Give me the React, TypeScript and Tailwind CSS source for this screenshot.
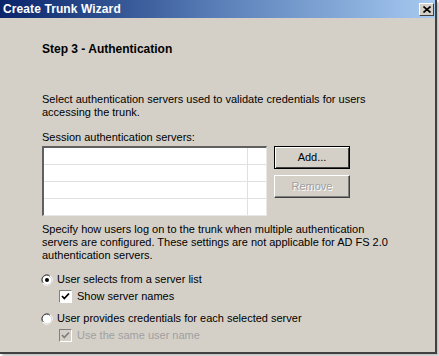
import type { ReactNode } from 'react';

const font = { fontFamily: '"Liberation Sans", Arial, sans-serif' };

function Radio({ checked }: { checked?: boolean }) {
  return (
    <svg width="12" height="12" viewBox="0 0 12 12" className="shrink-0">
      <circle cx="6" cy="6" r="5.5" fill="#fff" />
      <path d="M1.2 8.5 A5.5 5.5 0 0 1 8.5 1.2" stroke="#808080" strokeWidth="1" fill="none" />
      <path d="M2.4 8.9 A4.5 4.5 0 0 1 8.9 2.4" stroke="#404040" strokeWidth="1" fill="none" />
      <path d="M10.8 3.5 A5.5 5.5 0 0 1 3.5 10.8" stroke="#fff" strokeWidth="1" fill="none" />
      <path d="M9.6 3.1 A4.5 4.5 0 0 1 3.1 9.6" stroke="#d4d0c8" strokeWidth="1" fill="none" />
      {checked && <circle cx="6" cy="6" r="2" fill="#000" />}
    </svg>
  );
}

function Check({ disabled }: { disabled?: boolean }) {
  return (
    <span
      className={`w-[13px] h-[13px] shrink-0 border border-t-[#808080] border-l-[#808080] border-r-white border-b-white flex items-center justify-center ${disabled ? 'bg-[#d4d0c8]' : 'bg-white'}`}
    >
      <svg width="9" height="9" viewBox="0 0 9 9">
        <path d="M1 4 L3.3 6.5 L8 1.5" stroke={disabled ? '#808080' : '#000'} strokeWidth="1.8" fill="none" />
      </svg>
    </span>
  );
}

function Button({ children, primary, disabled }: { children: ReactNode; primary?: boolean; disabled?: boolean }) {
  return (
    <div
      className={`w-[76px] h-[23px] flex items-center justify-center text-[11px] bg-[#d4d0c8] ${
        primary
          ? 'border border-black shadow-[inset_1px_1px_0_#fff,inset_-1px_-1px_0_#404040]'
          : 'border border-t-white border-l-white border-r-[#404040] border-b-[#404040] shadow-[inset_-1px_-1px_0_#808080]'
      } ${disabled ? 'text-[#a0a0a0] [text-shadow:1px_1px_0_#fff]' : 'text-black'}`}
    >
      {children}
    </div>
  );
}

export default function App() {
  return (
    <div className="w-[439px] h-[356px] bg-white" style={font}>
      <div className="w-[437px] h-[354px] bg-[#d4d0c8] border-r-2 border-b-2 border-[#404040] shadow-[2px_2px_2px_rgba(0,0,0,0.25)] flex flex-col">
        {/* Title bar */}
        <div className="h-[18px] flex items-center justify-between pl-[3px] pr-[1px] bg-gradient-to-r from-[#0a246a] via-[#5a7fb8] to-[#a6caf0]">
          <span className="text-white text-[12px] font-bold tracking-[0.1px]">Create Trunk Wizard</span>
          <div className="w-[15px] h-[13px] bg-[#d4d0c8] border border-t-white border-l-white border-r-[#404040] border-b-[#404040] flex items-center justify-center">
            <svg width="8" height="7" viewBox="0 0 8 7">
              <path d="M0.5 0.5 L7.5 6.5 M7.5 0.5 L0.5 6.5" stroke="#000" strokeWidth="1.6" />
            </svg>
          </div>
        </div>

        <div className="pl-[42px] pr-4 text-[11px] text-black leading-[13px]">
          <div className="mt-[25px] font-bold text-[12px]">Step 3 - Authentication</div>

          <p className="mt-[37px]">
            Select authentication servers used to validate credentials for users
            <br />
            accessing the trunk.
          </p>

          <div className="mt-[12px]">Session authentication servers:</div>

          <div className="mt-[2px] flex gap-[7px]">
            <div className="w-[225px] h-[70px] bg-white border border-t-[#606060] border-l-[#606060] border-r-[#e8e8e8] border-b-[#e8e8e8] border-t-2 border-l-2 flex flex-col">
              {[0, 1, 2, 3].map((i) => (
                <div key={i} className="flex-1 flex border-b border-[#e0e0e0] last:border-b-0">
                  <div className="flex-1 border-r border-[#e0e0e0]" />
                  <div className="w-[18px]" />
                </div>
              ))}
            </div>
            <div className="flex flex-col gap-[6px]">
              <Button primary>Add...</Button>
              <Button disabled>Remove</Button>
            </div>
          </div>

          <p className="mt-[7px]">
            Specify how users log on to the trunk when multiple authentication
            <br />
            servers are configured. These settings are not applicable for AD FS 2.0
            <br />
            authentication servers.
          </p>

          <div className="mt-[11px] flex items-center gap-[4px] -ml-[1px]">
            <Radio checked />
            <span>User selects from a server list</span>
          </div>
          <div className="mt-[4px] ml-[17px] flex items-center gap-[5px]">
            <Check />
            <span>Show server names</span>
          </div>
          <div className="mt-[9px] flex items-center gap-[4px] -ml-[1px]">
            <Radio />
            <span>User provides credentials for each selected server</span>
          </div>
          <div className="mt-[4px] ml-[17px] flex items-center gap-[5px]">
            <Check disabled />
            <span className="text-[#a0a0a0]">Use the same user name</span>
          </div>
        </div>
      </div>
    </div>
  );
}
